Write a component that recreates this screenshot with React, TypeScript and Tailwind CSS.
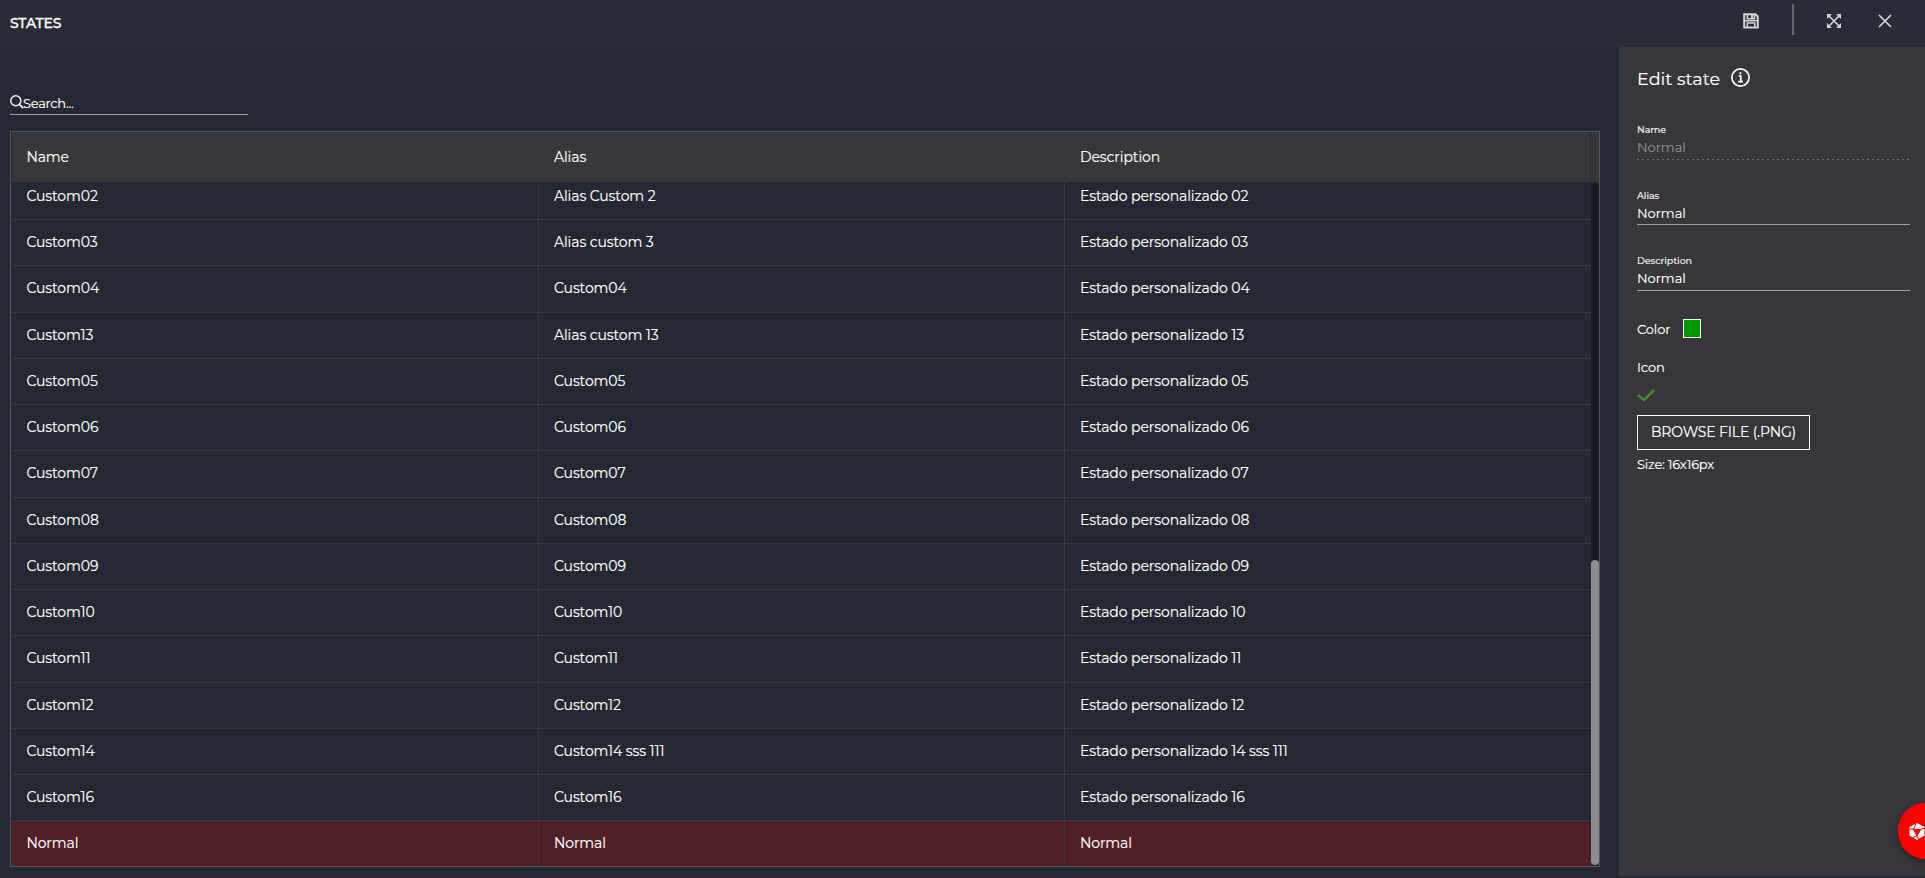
import { type ReactNode } from "react";

const rows: [string, string, string][] = [
  ["Custom02", "Alias Custom 2", "Estado personalizado 02"],
  ["Custom03", "Alias custom 3", "Estado personalizado 03"],
  ["Custom04", "Custom04", "Estado personalizado 04"],
  ["Custom13", "Alias custom 13", "Estado personalizado 13"],
  ["Custom05", "Custom05", "Estado personalizado 05"],
  ["Custom06", "Custom06", "Estado personalizado 06"],
  ["Custom07", "Custom07", "Estado personalizado 07"],
  ["Custom08", "Custom08", "Estado personalizado 08"],
  ["Custom09", "Custom09", "Estado personalizado 09"],
  ["Custom10", "Custom10", "Estado personalizado 10"],
  ["Custom11", "Custom11", "Estado personalizado 11"],
  ["Custom12", "Custom12", "Estado personalizado 12"],
  ["Custom14", "Custom14 sss 111", "Estado personalizado 14 sss 111"],
  ["Custom16", "Custom16", "Estado personalizado 16"],
  ["Normal", "Normal", "Normal"],
];

function Cell({ children, first, last }: { children: ReactNode; first?: boolean; last?: boolean }) {
  return (
    <div
      className={`flex items-center whitespace-nowrap ${first ? "pl-[14.4px]" : "pl-[15px]"} ${
        last ? "" : "border-r border-[#37363a]"
      }`}
    >
      {children}
    </div>
  );
}

function Field({ label, value, disabled, tall }: { label: string; value: string; disabled?: boolean; tall?: boolean }) {
  return (
    <div
      className={`flex flex-col ${tall ? "h-[36px]" : "h-[35px]"} ${
        disabled
          ? "bg-[repeating-linear-gradient(90deg,#737276_0_2px,transparent_2px_5px)] bg-[length:100%_1px] bg-bottom bg-no-repeat text-[#8e8d91]"
          : "border-b border-[#a09fa2] text-white"
      }`}
    >
      <span className="text-[9.5px] font-medium leading-[12px] tracking-[-0.08px] text-[#e6e6e7]">{label}</span>
      <span className="mt-[3px] text-[13px] leading-[16px]">{value}</span>
    </div>
  );
}

export default function App() {
  return (
    <div className="flex h-[878px] w-full flex-col overflow-hidden bg-[#242832] font-[Montserrat,Inter,sans-serif] text-white [-webkit-text-stroke:0.15px]">
      <header className="flex h-[47px] shrink-0 items-center bg-[#292b36] pl-[10px]">
        <h1 className="mt-[-1px] text-[14px] font-medium tracking-[-0.2px] [-webkit-text-stroke:0.3px]">STATES</h1>
        <div className="mb-[6px] ml-auto flex items-center pr-[33px] text-[#d4d4d6]">
          <svg className="mr-[33px] size-[16px]" viewBox="0 0 16 16" fill="none" stroke="currentColor" strokeWidth="2">
            <path d="M1.2 1.2H12.5L14.8 3.5V14.6H1.2Z" />
            <path d="M4.3 1.5V5.8H11.5V1.5M1 7.8H15M4.3 14.5V10H11.8V14.5" strokeWidth="1.6" />
            <path d="M9 1.5V5" strokeWidth="2.2" />
          </svg>
          <div className="mr-[33px] mt-[-2px] h-[31px] w-[2px] bg-[#65666e]" />
          <svg className="mr-[37px] size-[14px]" viewBox="0 0 14 14" fill="none" stroke="currentColor" strokeWidth="1.6">
            <path d="M1.5 1.5L12.5 12.5M12.5 1.5L1.5 12.5" />
            <path d="M0 0H5L0 5ZM14 0H9L14 5ZM0 14V9L5 14ZM14 14V9L9 14Z" fill="currentColor" stroke="none" />
          </svg>
          <svg className="size-[14px]" viewBox="0 0 14 14" fill="none" stroke="currentColor" strokeWidth="1.7">
            <path d="M1 1L13 13M13 1L1 13" />
          </svg>
        </div>
      </header>

      <div className="flex min-h-0 flex-1">
        <main className="flex w-[1619px] shrink-0 flex-col pb-[11px] pl-[10px] pr-[19px] pt-[46px]">
          <div className="flex h-[22px] w-[238px] items-start border-b border-[#a0a1a5]">
            <svg className="mt-[2px] size-[14px] shrink-0" viewBox="0 0 14 14" fill="none" stroke="#f1f1f2" strokeWidth="1.5">
              <circle cx="5.8" cy="5.8" r="5" />
              <path d="M9.4 9.4L13.2 13.2" strokeWidth="1.8" />
            </svg>
            <span className="ml-[-1px] mt-px text-[13px] leading-[18px] tracking-[-0.25px]">Search...</span>
          </div>

          <div className="mt-[16px] flex min-h-0 flex-1 flex-col border border-[#54565e] pl-px text-[14px] tracking-[-0.1px]">
            <div className="flex h-[50px] shrink-0 gap-px">
              <div className="grid flex-1 grid-cols-[527px_526px_1fr] bg-[#37363a]">
                <div className="flex items-center pl-[14.4px]">Name</div>
                <div className="flex items-center pl-[15px]">Alias</div>
                <div className="flex items-center pl-[15px]">Description</div>
              </div>
              <div className="w-[8px] bg-[#37363a]" />
            </div>
            <div className="flex min-h-0 flex-1">
              <div className="flex flex-1 flex-col justify-end overflow-hidden">
                <div className="mb-[-0.5px]">
                  {rows.map((r) => (
                    <div
                      key={r[0]}
                      className={`grid h-[46.25px] grid-cols-[527px_526px_1fr] border-t border-[#37363a] ${
                        r[0] === "Normal" ? "bg-[#4f2028]" : ""
                      }`}
                    >
                      <Cell first>{r[0]}</Cell>
                      <Cell>{r[1]}</Cell>
                      <Cell last>{r[2]}</Cell>
                    </div>
                  ))}
                </div>
              </div>
              <div className="mb-px mt-px flex w-[8px] flex-col justify-end rounded-[4px] bg-[#1b1b24]">
                <div className="h-[305px] rounded-[4px] bg-[#8e8d91]" />
              </div>
            </div>
          </div>
        </main>

        <aside className="mb-[2px] flex flex-1 flex-col bg-[#37363a] pl-[18px] pr-[15px] pt-[20px]">
          <div className="flex h-[24px] items-center">
            <h2 className="text-[17.6px] leading-[24px]">Edit state</h2>
            <svg className="mb-[4px] ml-[11px] size-[19px]" viewBox="0 0 19 19" fill="none" stroke="white" strokeWidth="1.7">
              <circle cx="9.5" cy="9.5" r="8.6" />
              <path d="M7.5 8H9.8V13.5M7.2 13.7H12" />
              <path d="M8.5 5.2H10.3" strokeWidth="2" />
            </svg>
          </div>
          <div className="mt-[33px] flex flex-col gap-[30px]">
            <Field label="Name" value="Normal" disabled tall />
            <Field label="Alias" value="Normal" />
            <Field label="Description" value="Normal" tall />
          </div>
          <div className="mt-[28px] flex h-[19px] items-center gap-[13px] text-[13px] tracking-[-0.1px]">
            <span className="mt-[2px]">Color</span>
            <span className="h-[19px] w-[18px] border border-white bg-[#009800]" />
          </div>
          <span className="mt-[20px] text-[13px] leading-[18px] tracking-[-0.1px]">Icon</span>
          <svg className="mt-[13px] h-[13px] w-[18px]" viewBox="0 0 18 13" fill="none" stroke="#4a8233" strokeWidth="2.8">
            <path d="M0.8 6L7 11L17.2 1" />
          </svg>
          <button className="mt-[13px] flex h-[35px] w-[173px] items-center justify-center border border-white text-[14px] tracking-[-0.15px]">
            BROWSE FILE (.PNG)
          </button>
          <span className="mt-[5px] text-[13px] leading-[18px] tracking-[-0.2px]">Size: 16x16px</span>
        </aside>
      </div>

      <div className="absolute left-[1898px] top-[803px] h-[56px] w-[27px] overflow-hidden rounded-l-[28px] bg-[#ff0000] shadow-[0_3px_6px_rgba(0,0,0,0.4)]">
        <svg className="ml-[11px] mt-[20px] h-[17px] w-[16px]" viewBox="0 0 16 17">
          <path d="M8 0L15.5 4V12.5L8 17L0.5 12.5V4Z" fill="white" />
          <path d="M4 6H12L8 13Z" fill="#ff0000" />
          <path d="M0 6.3L5 5.8L7 0M16 5.2L12 6M12 6L8 13L10 17M4 6L8 13L3.5 14.6" stroke="#ff0000" fill="none" strokeWidth="0.9" />
        </svg>
      </div>
    </div>
  );
}
